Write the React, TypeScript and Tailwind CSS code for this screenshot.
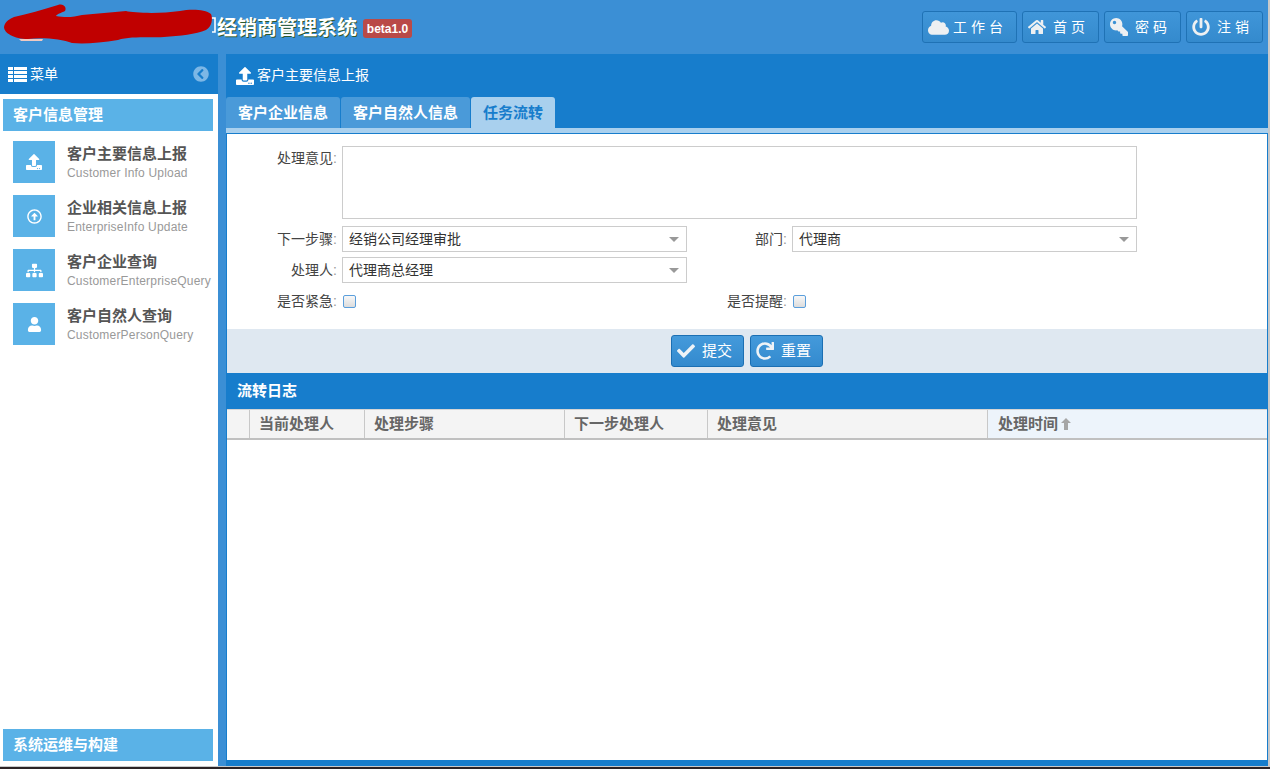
import { ReactNode } from 'react';
import {
  FaCheck,
  FaChevronCircleLeft,
  FaCloud,
  FaHome,
  FaKey,
  FaPowerOff,
  FaRedo,
  FaSitemap,
  FaUpload,
  FaUser,
  FaRegArrowAltCircleUp,
} from 'react-icons/fa';

const cjk = "font-['Liberation_Sans','Noto_Sans_CJK_SC',sans-serif]";

const topButtons = [
  { label: '工作台', icon: <FaCloud className="text-[21px]" />, width: 'w-[95px]', gap: 'gap-[4px]' },
  { label: '首页', icon: <FaHome className="text-[18px]" />, width: 'w-[77px]', gap: 'gap-[7px]' },
  { label: '密码', icon: <FaKey className="-scale-x-100 text-[18px]" />, width: 'w-[77px]', gap: 'gap-[7px]' },
  { label: '注销', icon: <FaPowerOff className="text-[18px]" />, width: 'w-[77px]', gap: 'gap-[7px]' },
];

const menuItems = [
  { title: '客户主要信息上报', sub: 'Customer Info Upload', icon: <FaUpload className="text-[16px]" /> },
  { title: '企业相关信息上报', sub: 'EnterpriseInfo Update', icon: <FaRegArrowAltCircleUp className="text-[15px]" /> },
  { title: '客户企业查询', sub: 'CustomerEnterpriseQuery', icon: <FaSitemap className="text-[17px]" /> },
  { title: '客户自然人查询', sub: 'CustomerPersonQuery', icon: <FaUser className="text-[15px]" /> },
];

const columns = [
  { label: '当前处理人', width: 'w-[115px]' },
  { label: '处理步骤', width: 'w-[200px]' },
  { label: '下一步处理人', width: 'w-[143px]' },
  { label: '处理意见', width: 'w-[280px]' },
];

function Label({ text, width }: { text: string; width: string }) {
  return (
    <div className={`${width} shrink-0 text-right text-[14px] leading-[26px] text-[#444]`}>
      {text}
      <span className="text-[#999]">:</span>
    </div>
  );
}

function SelectBox({ value }: { value: string }) {
  return (
    <div className="ml-[5px] flex h-[26px] w-[345px] items-center justify-between border border-[#ccc] bg-white pl-[6px] pr-[7px] text-[14px] text-[#333]">
      <span>{value}</span>
      <span className="h-0 w-0 border-x-[5px] border-t-[5px] border-x-transparent border-t-[#999]" />
    </div>
  );
}

function Check() {
  return (
    <input
      type="checkbox"
      className="ml-[6px] mt-[1px] h-[13px] w-[13px] appearance-none rounded-[2px] border border-[#5b9fdc] bg-gradient-to-b from-[#f8f8f8] to-[#dcdcdc]"
    />
  );
}

function ActionButton({ icon, label }: { icon: ReactNode; label: string }) {
  return (
    <button className="flex h-[32px] w-[73px] items-center gap-[7px] rounded-[3px] border border-[#1b6fb3] bg-gradient-to-b from-[#449adb] to-[#338ace] pl-[5px] text-[15px] text-white">
      <span className="text-[#eef3f7]">{icon}</span>
      {label}
    </button>
  );
}

function SectionTitle({ text }: { text: string }) {
  return (
    <div className="mx-[3px] flex h-[32px] w-[210px] items-center bg-[#5ab2e7] pl-[10px] text-[15px] font-bold text-white">
      {text}
    </div>
  );
}

export default function App() {
  return (
    <div className={`h-[769px] w-[1270px] overflow-hidden bg-[#2b2326] ${cjk}`}>
      <div className="flex h-[767px] w-[1270px] flex-col border-r-2 border-b border-[#c9c9c9] bg-[#3b8fd5]">
        <header className="relative flex h-[54px] shrink-0 items-center">
          {/* redacted part of the logo text */}
          <svg className="absolute left-0 top-0" width="230" height="54" viewBox="0 0 230 54">
            <path d="M19 39 L43 39 L42 41 L21 41 Z" fill="#eec9c2" />
            <path d="M140 34 L160 34 L160 36 L140 36 Z M163 34 L168 34 L168 36 L163 36 Z" fill="#f7f3f0" />
            <path d="M207 18 L215 18 L215 32 L212 32" fill="none" stroke="#ffffff" strokeWidth="1.6" />
            <path
              d="M4 27 C5 21 10 19 14 17 C28 14 42 10 58 5 C64 3 67 8 65 11 C61 13 57 14 56 16 C66 18 74 17 82 15 C96 14 112 12 126 11 C134 13 160 14 180 11 C190 9 205 9 211 14 C213 18 212 27 206 30 C196 34 180 36 164 37 C150 38 130 36 118 40 C100 43 84 44 72 43 C62 39 42 37 28 39 C14 39 4 33 4 27 Z"
              fill="#c00000"
            />
          </svg>
          <div className="relative ml-[217px] mt-[1px] text-[20px] font-bold text-white [text-shadow:1px_1px_0_#2e5a2e]">
            经销商管理系统
          </div>
          <span className="ml-[6px] mt-[3px] flex h-[19px] w-[49px] items-center justify-center rounded-[3px] bg-[#b94a48] text-[12px] font-bold text-white">
            beta1.0
          </span>
          <nav className="ml-auto mr-[5px] flex gap-[5px]">
            {topButtons.map((b) => (
              <button
                key={b.label}
                className={`${b.width} ${b.gap} flex h-[32px] items-center rounded-[3px] border border-[#1f72b5] bg-gradient-to-b from-[#4096d9] to-[#348acd] pl-[5px] text-[14px] tracking-[4px] text-white`}
              >
                <span className="text-[#eef0f2]">{b.icon}</span>
                {b.label}
              </button>
            ))}
          </nav>
        </header>

        <div className="flex min-h-0 flex-1">
          <aside className="flex w-[218px] shrink-0 flex-col bg-white">
            <div className="flex h-[40px] shrink-0 items-center justify-between bg-[#177dcc] pl-[8px] pr-[9px] text-[14px] text-white">
              <div className="flex items-center gap-[3px]">
                <svg width="19" height="15" viewBox="0 0 19 15" fill="currentColor">
                  <path d="M0 0h5v3H0zM6 0h13v3H6zM0 4h5v3H0zM6 4h13v3H6zM0 8h5v3H0zM6 8h13v3H6zM0 12h5v3H0zM6 12h13v3H6z" />
                </svg>
                菜单
              </div>
              <FaChevronCircleLeft className="text-[16px] text-[#7cb7e6]" />
            </div>
            <div className="mt-[5px]">
              <SectionTitle text="客户信息管理" />
            </div>
            <ul className="mt-[10px] flex flex-col gap-[12px] pl-[13px]">
              {menuItems.map((m) => (
                <li key={m.title} className="flex h-[42px] items-start">
                  <div className="flex h-[42px] w-[42px] shrink-0 items-center justify-center bg-[#5ab2e7] text-white">
                    {m.icon}
                  </div>
                  <div className="ml-[12px] mt-[3px] whitespace-nowrap">
                    <div className="mb-[1px] text-[15px] font-bold leading-[20px] text-[#555]">{m.title}</div>
                    <div className="text-[12px] leading-[16px] tracking-[0.2px] text-[#999]">{m.sub}</div>
                  </div>
                </li>
              ))}
            </ul>
            <div className="mt-auto mb-[5px]">
              <SectionTitle text="系统运维与构建" />
            </div>
          </aside>

          <main className="ml-[8px] flex min-w-0 flex-1 flex-col bg-[#177dcc] pb-[6px]">
            <div className="flex h-[43px] shrink-0 items-center gap-[3px] pl-[10px] text-[14px] text-white">
              <FaUpload className="text-[18px]" />
              客户主要信息上报
            </div>
            <div className="flex h-[31px] shrink-0 gap-px">
              <div className="flex w-[114px] items-center justify-center rounded-t-[3px] bg-[#4a9ad9] pt-[2px] text-[15px] font-bold text-white">
                客户企业信息
              </div>
              <div className="flex w-[129px] items-center justify-center rounded-t-[3px] bg-[#4a9ad9] pt-[2px] text-[15px] font-bold text-white">
                客户自然人信息
              </div>
              <div className="flex w-[84px] items-center justify-center rounded-t-[3px] bg-[#a9d0ee] pt-[2px] text-[15px] font-bold text-[#177dcc]">
                任务流转
              </div>
            </div>
            <div className="h-[5px] shrink-0 bg-[#a9d0ee]" />
            <div className="flex min-h-0 flex-1 flex-col border-x border-t border-[#177dcc] bg-white">
              <form className="flex h-[195px] shrink-0 flex-col pt-[12px]">
                <div className="flex">
                  <div className="-mt-[1px]">
                    <Label text="处理意见" width="w-[110px]" />
                  </div>
                  <textarea className="ml-[5px] h-[73px] w-[795px] resize-none border border-[#ccc] outline-none" />
                </div>
                <div className="mt-[7px] flex">
                  <Label text="下一步骤" width="w-[110px]" />
                  <SelectBox value="经销公司经理审批" />
                  <Label text="部门" width="w-[100px]" />
                  <SelectBox value="代理商" />
                </div>
                <div className="mt-[5px] flex">
                  <Label text="处理人" width="w-[110px]" />
                  <SelectBox value="代理商总经理" />
                </div>
                <div className="mt-[5px] flex items-center">
                  <Label text="是否紧急" width="w-[110px]" />
                  <Check />
                  <div className="ml-[351px]">
                    <Label text="是否提醒" width="w-[80px]" />
                  </div>
                  <Check />
                </div>
              </form>
              <div className="flex h-[44px] shrink-0 items-center justify-center gap-[6px] bg-[#dfe8f1]">
                <ActionButton icon={<FaCheck className="text-[18px]" />} label="提交" />
                <ActionButton icon={<FaRedo className="text-[18px]" />} label="重置" />
              </div>
              <div className="flex h-[36px] shrink-0 items-center bg-[#177dcc] pl-[10px] text-[15px] font-bold text-white">
                流转日志
              </div>
              <div className="flex h-[31px] shrink-0 border-y border-b-2 border-t-[#d5d5d5] border-b-[#c0c0c0] bg-[#f4f4f4] text-[15px] font-bold text-[#666]">
                <div className="w-[23px] shrink-0 border-r border-[#c8c8c8]" />
                {columns.map((c) => (
                  <div
                    key={c.label}
                    className={`${c.width} shrink-0 border-r border-[#c8c8c8] pl-[9px] leading-[28px]`}
                  >
                    {c.label}
                  </div>
                ))}
                <div className="flex flex-1 items-center gap-[3px] bg-[#edf4fb] pl-[10px]">
                  处理时间
                  <svg width="10" height="12" viewBox="0 0 10 12" fill="#a6a6a6">
                    <path d="M5 0 L10 5 L7 5 L7 12 L3 12 L3 5 L0 5 Z" />
                  </svg>
                </div>
              </div>
              <div className="flex-1 bg-white" />
            </div>
          </main>
        </div>
      </div>
    </div>
  );
}
